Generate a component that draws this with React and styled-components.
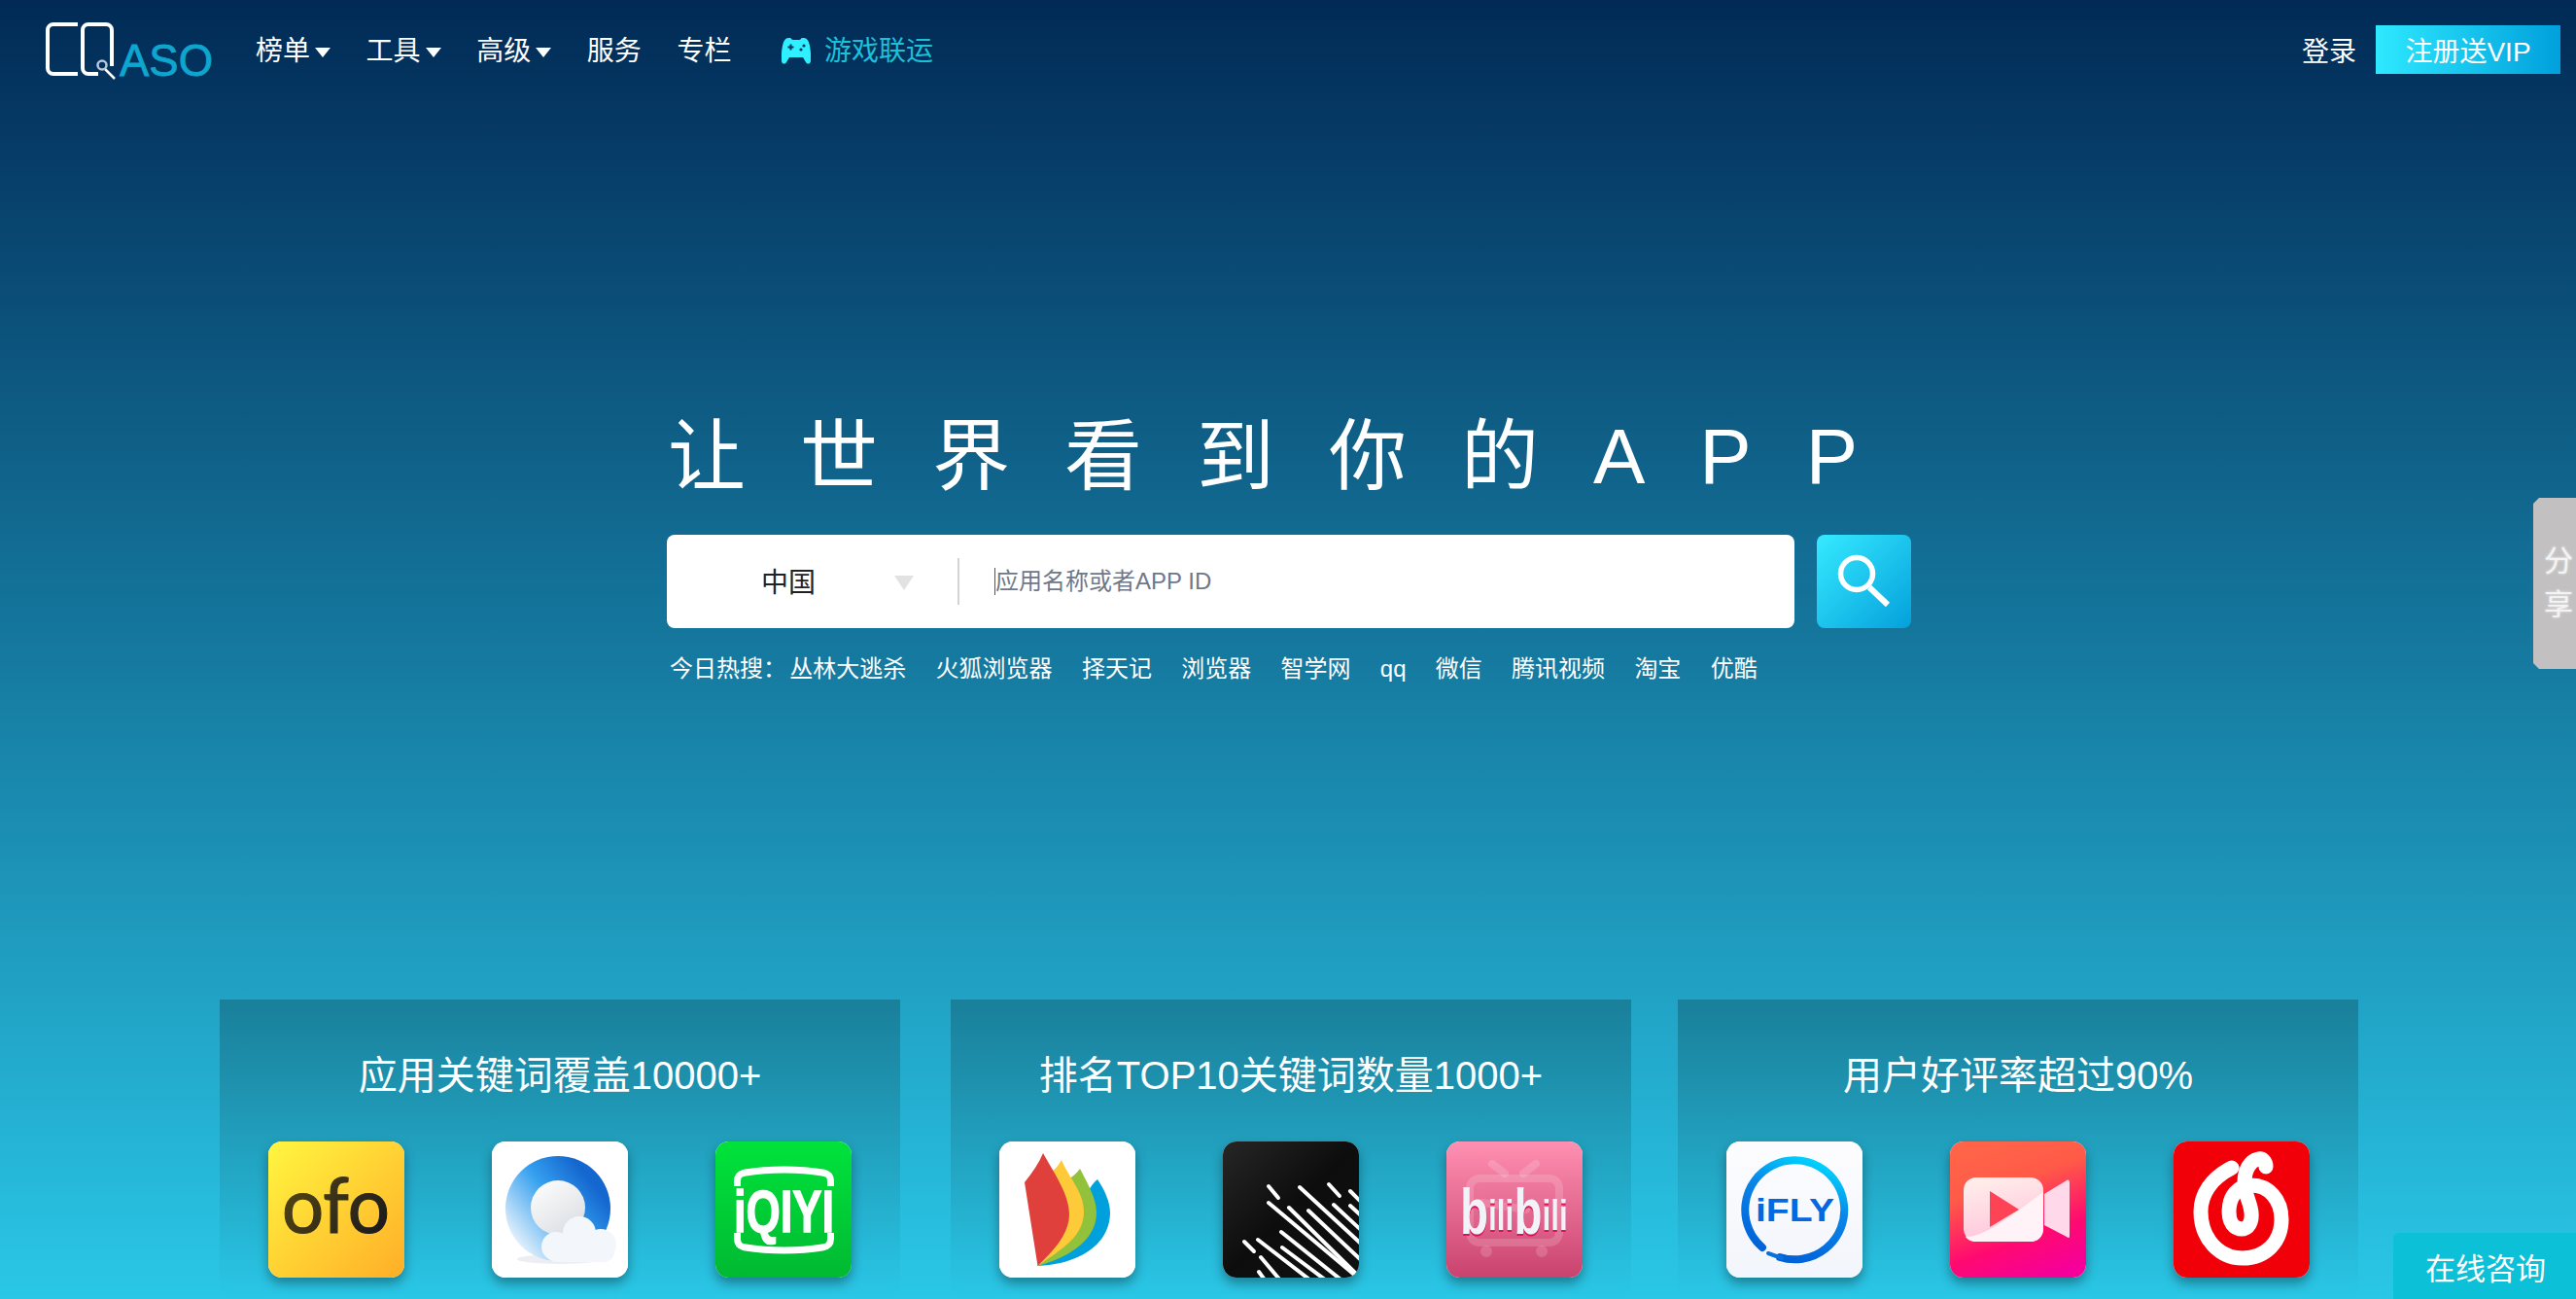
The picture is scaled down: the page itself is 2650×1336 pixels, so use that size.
import React from 'react';
import styled, { createGlobalStyle } from 'styled-components';

const GlobalStyle = createGlobalStyle`
  html, body {
    margin: 0;
    padding: 0;
    overflow: hidden;
  }
  body {
    font-family: "Liberation Sans", "Noto Sans CJK SC", sans-serif;
    color: #fff;
  }
  * {
    box-sizing: border-box;
  }
`;

const Page = styled.div`
  position: relative;
  height: 1336px;
  overflow: hidden;
  background: linear-gradient(180deg, #012a56 0%, #2ac7e7 100%);
`;

// header
const Header = styled.header`
  height: 102px;
  padding: 0 16px 0 45px;
  display: flex;
  align-items: center;
`;
const Logo = styled.svg`
  width: 177px;
  height: 62px;
  flex: none;
  overflow: visible;
`;
const LogoText = styled.text`
  font-family: "Liberation Sans", sans-serif;
  font-size: 46px;
  fill: #0ea6cf;
  stroke: #0ea6cf;
  stroke-width: 0.8px;
`;
const Nav = styled.nav`
  margin: 3px 0 0 41px;
  display: flex;
  align-items: center;
  gap: 36.6px;
  font-size: 28px;
  line-height: 40px;
`;
const NavItem = styled.a`
  display: flex;
  align-items: center;
  color: #fff;
`;
const Caret = styled.i`
  margin: 3px 0 0 5px;
  border-left: 8px solid transparent;
  border-right: 8px solid transparent;
  border-top: 10px solid #fff;
`;
const GameLink = styled.a`
  margin-left: 15px;
  display: flex;
  align-items: center;
  gap: 14px;
  color: #1cc1d9;
`;
const HeaderRight = styled.div`
  margin-left: auto;
  display: flex;
  align-items: center;
  gap: 20px;
  font-size: 28px;
`;
const RegisterButton = styled.a`
  width: 190px;
  height: 50px;
  display: flex;
  align-items: center;
  justify-content: center;
  background: linear-gradient(90deg, #2ee9ff 0%, #00a0dc 100%);
  color: #fff;
`;

// hero
const Hero = styled.section`
  width: 1280px;
  margin: 313px 0 0 686px;
`;
const Slogan = styled.h1`
  margin: 0 0 25px;
  padding-left: 1px;
  font-size: 80px;
  line-height: 110px;
  font-weight: 400;
  letter-spacing: 56px;
  white-space: nowrap;
`;
const SearchRow = styled.div`
  display: flex;
  gap: 23px;
`;
const SearchBox = styled.div`
  width: 1160px;
  height: 96px;
  background: #fff;
  border-radius: 8px;
  display: flex;
  align-items: center;
`;
const CountrySelect = styled.div`
  width: 301px;
  height: 48px;
  padding: 0 45px 3px 97px;
  display: flex;
  align-items: center;
  justify-content: space-between;
  border-right: 2px solid #d4d4d4;
  font-size: 28px;
  color: #222;
`;
const SelectCaret = styled.i`
  margin-top: 5px;
  border-left: 10px solid transparent;
  border-right: 10px solid transparent;
  border-top: 15px solid #e2e2e2;
`;
const SearchInput = styled.input`
  flex: 1;
  height: 28px;
  margin: 0 36px;
  padding: 0;
  border: 0;
  border-left: 1px solid #555;
  outline: none;
  background: none;
  font-family: inherit;
  font-size: 24px;

  &::placeholder {
    color: #6f7889;
    opacity: 1;
  }
`;
const SearchButton = styled.button`
  width: 97px;
  height: 96px;
  padding: 0;
  border: 0;
  border-radius: 8px;
  background: linear-gradient(135deg, #36eaff 0%, #04a0dc 100%);
  display: flex;
`;
const HotRow = styled.div`
  margin-top: 30px;
  padding-left: 3px;
  display: flex;
  gap: 30.3px;
  font-size: 24px;
  line-height: 24px;
  white-space: nowrap;
`;
const HotLabel = styled.span`
  margin-right: -30px;
  width: 123px;
`;

// feature cards
const CardRow = styled.section`
  margin-top: 328px;
  padding-left: 226px;
  display: flex;
`;
const Card = styled.div`
  width: 700px;
  height: 308px;
  padding: 54px 50px 0;
  background: linear-gradient(180deg, rgba(0, 0, 0, 0.22) 0%, rgba(0, 0, 0, 0) 100%);

  &:nth-child(2) {
    margin: 0 48px 0 52px;
  }
`;
const CardTitle = styled.h2`
  margin: 0 0 44px;
  font-size: 40px;
  line-height: 48px;
  font-weight: 400;
  text-align: center;
`;
const IconRow = styled.div`
  display: flex;
  justify-content: space-between;
`;
const AppIcon = styled.div`
  width: 140px;
  height: 140px;
  border-radius: 14px;
  overflow: hidden;
  background: #fff;
  box-shadow: 0 6px 12px rgba(0, 0, 0, 0.35);

  svg {
    display: block;
    width: 140px;
    height: 140px;
  }
`;
const BiliText = styled.text`
  font-family: "Liberation Sans", sans-serif;
  font-weight: 700;
  fill: #f1f3f8;
  filter: drop-shadow(0 2px 0 #d8135a);
`;
const IconText = styled.text`
  font-family: ${(p) => p.font || '"Liberation Sans", sans-serif'};
  font-weight: ${(p) => p.weight || 700};
  font-size: ${(p) => p.size}px;
`;

// floating bits
const ShareTab = styled.div`
  position: absolute;
  right: 0;
  top: 512px;
  width: 44px;
  height: 176px;
  padding: 42px 0 0 11px;
  background: #c2c0c1;
  clip-path: polygon(6px 0, 100% 0, 100% 100%, 6px 100%, 0 170px, 0 6px);
  font-size: 30px;
  line-height: 45px;
  color: #f4f4f4;
  text-shadow: 0 0 3px rgba(255, 255, 255, 0.7);
  overflow: hidden;
`;
const ShareChar = styled.div`
  width: 30px;
`;
const ChatButton = styled.div`
  position: absolute;
  right: 0;
  bottom: 0;
  width: 188px;
  height: 68px;
  padding-left: 2px;
  border-top-left-radius: 6px;
  background: #0cc0d8;
  display: flex;
  align-items: center;
  justify-content: center;
  font-size: 31px;
`;

const OfoIcon = () => (
  <svg viewBox="0 0 140 140">
    <defs>
      <linearGradient id="ofoBg" x1="0" y1="0" x2="1" y2="1">
        <stop offset="0" stopColor="#fff640" />
        <stop offset="1" stopColor="#ffae27" />
      </linearGradient>
      <linearGradient id="ofoInk" x1="0" y1="0" x2="1" y2="0.6">
        <stop offset="0" stopColor="#5f4c12" />
        <stop offset="1" stopColor="#1d1d1d" />
      </linearGradient>
    </defs>
    <rect width="140" height="140" fill="url(#ofoBg)" />
    <IconText x="14" y="94" size="80" weight="400" font='"Lato", sans-serif' fill="url(#ofoInk)" stroke="url(#ofoInk)" strokeWidth="1.2" textLength="111" lengthAdjust="spacingAndGlyphs">ofo</IconText>
  </svg>
);

const QQBrowserIcon = () => (
  <svg viewBox="0 0 140 140">
    <defs>
      <linearGradient id="qqRing" x1="0.9" y1="0.35" x2="0.15" y2="0.95">
        <stop offset="0" stopColor="#1467cf" />
        <stop offset="0.4" stopColor="#35a0f0" />
        <stop offset="1" stopColor="#f2f7fc" />
      </linearGradient>
      <linearGradient id="qqEgg" x1="0" y1="0" x2="0.7" y2="1">
        <stop offset="0" stopColor="#fff" />
        <stop offset="1" stopColor="#dcdfe3" />
      </linearGradient>
    </defs>
    <rect width="140" height="140" fill="#fff" />
    <ellipse cx="70" cy="121" rx="44" ry="5" fill="#eceef3" />
    <circle cx="68" cy="69" r="54" fill="url(#qqRing)" />
    <circle cx="68" cy="68" r="28" fill="url(#qqEgg)" />
    <g fill="#f3f6fa">
      <circle cx="90" cy="94" r="17" />
      <circle cx="66" cy="108" r="15" />
      <circle cx="112" cy="106" r="16" />
      <rect x="56" y="102" width="70" height="22" rx="10" />
    </g>
  </svg>
);

const IqiyiIcon = () => (
  <svg viewBox="0 0 140 140">
    <defs>
      <linearGradient id="iqBg" x1="0" y1="0" x2="0" y2="1">
        <stop offset="0" stopColor="#00e33b" />
        <stop offset="1" stopColor="#00b932" />
      </linearGradient>
    </defs>
    <rect width="140" height="140" fill="url(#iqBg)" />
    <g fill="none" stroke="#fff" strokeWidth="7">
      <path d="M22.5 46 V41 C22.5 35 25 33 31 32 C55 28 86 28 110 32 C116 33 118.5 35 118.5 41 V46" />
      <path d="M22.5 94 V100 C22.5 106 25 108 31 109 C55 113 86 113 110 109 C116 108 118.5 106 118.5 100 V94" />
    </g>
    <g transform="translate(19 93) scale(0.73 1)">
      <IconText size="62" fill="#fff" stroke="#fff" strokeWidth="1.4">iQIYI</IconText>
    </g>
  </svg>
);

const BookIcon = () => (
  <svg viewBox="0 0 140 140">
    <rect width="140" height="140" fill="#fff" />
    <path d="M39.5 128 C85 126 114 104 114 73 C114 62 108 49 101 39 C98 41 96 44 94 47 Z" fill="#00a0dc" />
    <path d="M39.5 128 C75 118 100 100 100 73 C100 58 90 42 83 28 C80 32 76 36 72 38 Z" fill="#92c13c" />
    <path d="M39.5 128 C65 110 87 98 87 72 C87 52 72 38 64 19 C60 26 56 30 52 32 Z" fill="#fdca3a" />
    <path d="M39.5 128 L26 42 C34 32 41 22 45 12 C58 35 72 55 72 75 C72 95 56 112 39.5 128 Z" fill="#e0403c" />
  </svg>
);

const stripes = [
  [47, 46, 57, 58], [79, 47, 142, 105], [109, 44, 120, 56], [131, 51, 146, 66],
  [47, 63, 134, 136], [68, 68, 137, 136], [88, 71, 142, 122], [114, 65, 142, 91],
  [131, 66, 142, 76], [22, 103, 32, 113], [36, 101, 93, 145], [60, 93, 125, 145],
  [61, 109, 109, 145], [39, 119, 61, 145], [37, 134, 45, 145],
];

const StripesIcon = () => (
  <svg viewBox="0 0 140 140">
    <defs>
      <linearGradient id="stripeBg" x1="0" y1="0" x2="1" y2="1">
        <stop offset="0" stopColor="#262626" />
        <stop offset="0.5" stopColor="#0d0d0d" />
        <stop offset="1" stopColor="#111" />
      </linearGradient>
    </defs>
    <rect width="140" height="140" fill="url(#stripeBg)" />
    {stripes.map(([x1, y1, x2, y2]) => (
      <line key={`${x1}-${y1}`} x1={x1} y1={y1} x2={x2} y2={y2} stroke="#fff" strokeWidth="4" strokeLinecap="round" />
    ))}
  </svg>
);

const BiliIcon = () => (
  <svg viewBox="0 0 140 140">
    <defs>
      <linearGradient id="biliBg" x1="0" y1="0" x2="0" y2="1">
        <stop offset="0" stopColor="#ff90b2" />
        <stop offset="1" stopColor="#c9436f" />
      </linearGradient>
    </defs>
    <rect width="140" height="140" fill="url(#biliBg)" />
    <g fill="none" stroke="#fff" strokeOpacity="0.16" strokeLinecap="round">
      <rect x="24" y="38" width="92" height="66" rx="10" strokeWidth="8" />
      <path d="M47 23 L60 33 M92 23 L79 33" strokeWidth="8" />
      <path d="M37 63 L82 70" strokeWidth="8" />
      <path d="M41 113 V113 M98 113 V113" strokeWidth="12" />
    </g>
    <g transform="translate(14 95) scale(0.72 1)">
      <BiliText>
        <tspan fontSize="66">b</tspan>
        <tspan fontSize="44" dy="-4">ili</tspan>
        <tspan fontSize="66" dy="4">b</tspan>
        <tspan fontSize="44" dy="-4">ili</tspan>
      </BiliText>
    </g>
  </svg>
);

const IflyIcon = () => (
  <svg viewBox="0 0 140 140">
    <defs>
      <linearGradient id="iflyBg" x1="0" y1="0" x2="0" y2="1">
        <stop offset="0" stopColor="#fdfdff" />
        <stop offset="1" stopColor="#f2f5fb" />
      </linearGradient>
      <linearGradient id="iflyRing" x1="0.75" y1="0" x2="0.35" y2="1">
        <stop offset="0" stopColor="#00d6ff" />
        <stop offset="0.4" stopColor="#0a86e8" />
        <stop offset="1" stopColor="#0060d8" />
      </linearGradient>
    </defs>
    <rect width="140" height="140" fill="url(#iflyBg)" />
    <path d="M37 109 A51 51 0 1 1 55 119" fill="none" stroke="url(#iflyRing)" strokeWidth="8" strokeLinecap="round" />
    <path d="M43 115 L57 120" stroke="#0a70dc" strokeWidth="4" strokeLinecap="round" />
    <IconText x="30" y="82" size="34" fill="#0668e0" textLength="81" lengthAdjust="spacingAndGlyphs">iFLY</IconText>
  </svg>
);

const VideoIcon = () => (
  <svg viewBox="0 0 140 140">
    <defs>
      <linearGradient id="vidBg" x1="0.35" y1="0" x2="0.7" y2="1">
        <stop offset="0" stopColor="#ff6448" />
        <stop offset="0.3" stopColor="#ff5a48" />
        <stop offset="0.7" stopColor="#ff0a70" />
        <stop offset="1" stopColor="#f5009a" />
      </linearGradient>
      <linearGradient id="vidBody" x1="0" y1="0" x2="0.3" y2="1">
        <stop offset="0" stopColor="#fff1ec" />
        <stop offset="1" stopColor="#ffc6dc" />
      </linearGradient>
    </defs>
    <rect width="140" height="140" fill="url(#vidBg)" />
    <rect x="14" y="37" width="82" height="66" rx="13" fill="url(#vidBody)" />
    <path d="M96 52 V90 C96 98 90 103 83 103 H27 C22 103 18 101 16 98 C32 98 48 88 96 52 Z" fill="#fff3f7" />
    <path d="M41 51 L71 70 L41 88 Z" fill="#ff4356" />
    <path d="M97 54 L120 40 C122 39 123 40 123 42 V97 C123 99 122 100 120 98 L97 86 Z" fill="#ffd8ea" />
  </svg>
);

const NeteaseIcon = () => (
  <svg viewBox="0 0 140 140">
    <rect width="140" height="140" fill="#f1000a" />
    <path
      d="M60 27 C38 38 28 55 28 72 C28 100 47 120 71 120 C95 120 111 103 111 80 C111 60 98 45 80 45 C66 45 57 57 57 72 C57 83 62 90 70 90 C77 90 81 83 80 73 C79 62 73 55 73 42 C73 30 78 20 87 18 C92 17 95 21 95 26"
      fill="none"
      stroke="#fff"
      strokeWidth="15"
      strokeLinecap="round"
    />
  </svg>
);

const hotWords = ['丛林大逃杀', '火狐浏览器', '择天记', '浏览器', '智学网', 'qq', '微信', '腾讯视频', '淘宝', '优酷'];

const cards = [
  { title: '应用关键词覆盖10000+', icons: [OfoIcon, QQBrowserIcon, IqiyiIcon] },
  { title: '排名TOP10关键词数量1000+', icons: [BookIcon, StripesIcon, BiliIcon] },
  { title: '用户好评率超过90%', icons: [IflyIcon, VideoIcon, NeteaseIcon] },
];

const App = () => {
  return (
    <Page>
      <GlobalStyle />
      <Header>
        <Logo viewBox="0 0 177 62">
          <g fill="none" stroke="#fff" strokeWidth="4">
            <path d="M35 5 H10 a6 6 0 0 0 -6 6 V50 a6 6 0 0 0 6 6 H35" />
            <path d="M56 56 H46 a6 6 0 0 1 -6 -6 V11 a6 6 0 0 1 6 -6 H64 a6 6 0 0 1 6 6 V48" />
            <path d="M63 51 L73 61" strokeWidth="2.5" />
            <circle cx="60" cy="47" r="4.5" stroke="#b8c8d8" strokeWidth="2.5" />
          </g>
          <LogoText x="78" y="58" textLength="96" lengthAdjust="spacingAndGlyphs">ASO</LogoText>
        </Logo>
        <Nav>
          <NavItem>榜单<Caret /></NavItem>
          <NavItem>工具<Caret /></NavItem>
          <NavItem>高级<Caret /></NavItem>
          <NavItem>服务</NavItem>
          <NavItem>专栏</NavItem>
          <GameLink>
            <svg width="30" height="27" viewBox="0 0 30 27">
              <path d="M7 0 H9 C10 0 10 2 12 2 H18 C20 2 20 0 21 0 H23 C26 0 28 3 29 8 C30 13 30.5 20 30 24 C29.5 27 26.5 27.5 25 25 L22 20 H8 L5 25 C3.5 27.5 .5 27 0 24 C-.5 20 0 13 1 8 C2 3 4 0 7 0 Z" fill="#2ff0ff" />
              <path d="M8.5 6.5 H10.5 V8.5 H12.5 V10.5 H10.5 V12.5 H8.5 V10.5 H6.5 V8.5 H8.5 Z" fill="#05365f" />
              <circle cx="23" cy="8" r="1.6" fill="#05365f" />
              <circle cx="20" cy="12" r="1.6" fill="#05365f" />
            </svg>
            游戏联运
          </GameLink>
        </Nav>
        <HeaderRight>
          <span>登录</span>
          <RegisterButton>注册送VIP</RegisterButton>
        </HeaderRight>
      </Header>

      <Hero>
        <Slogan>让世界看到你的APP</Slogan>
        <SearchRow>
          <SearchBox>
            <CountrySelect>
              中国
              <SelectCaret />
            </CountrySelect>
            <SearchInput placeholder="应用名称或者APP ID" />
          </SearchBox>
          <SearchButton>
            <svg width="97" height="96" viewBox="0 0 97 96">
              <circle cx="41" cy="40" r="16.5" fill="none" stroke="#fff" strokeWidth="5.5" />
              <path d="M54 54 L73 72" stroke="#fff" strokeWidth="6" />
            </svg>
          </SearchButton>
        </SearchRow>
        <HotRow>
          <HotLabel>今日热搜：</HotLabel>
          {hotWords.map((word) => (
            <span key={word}>{word}</span>
          ))}
        </HotRow>
      </Hero>

      <CardRow>
        {cards.map((card) => (
          <Card key={card.title}>
            <CardTitle>{card.title}</CardTitle>
            <IconRow>
              {card.icons.map((Icon, i) => (
                <AppIcon key={i}>
                  <Icon />
                </AppIcon>
              ))}
            </IconRow>
          </Card>
        ))}
      </CardRow>

      <ShareTab>
        <ShareChar>分</ShareChar>
        <ShareChar>享</ShareChar>
      </ShareTab>
      <ChatButton>在线咨询</ChatButton>
    </Page>
  );
};

export default App;
